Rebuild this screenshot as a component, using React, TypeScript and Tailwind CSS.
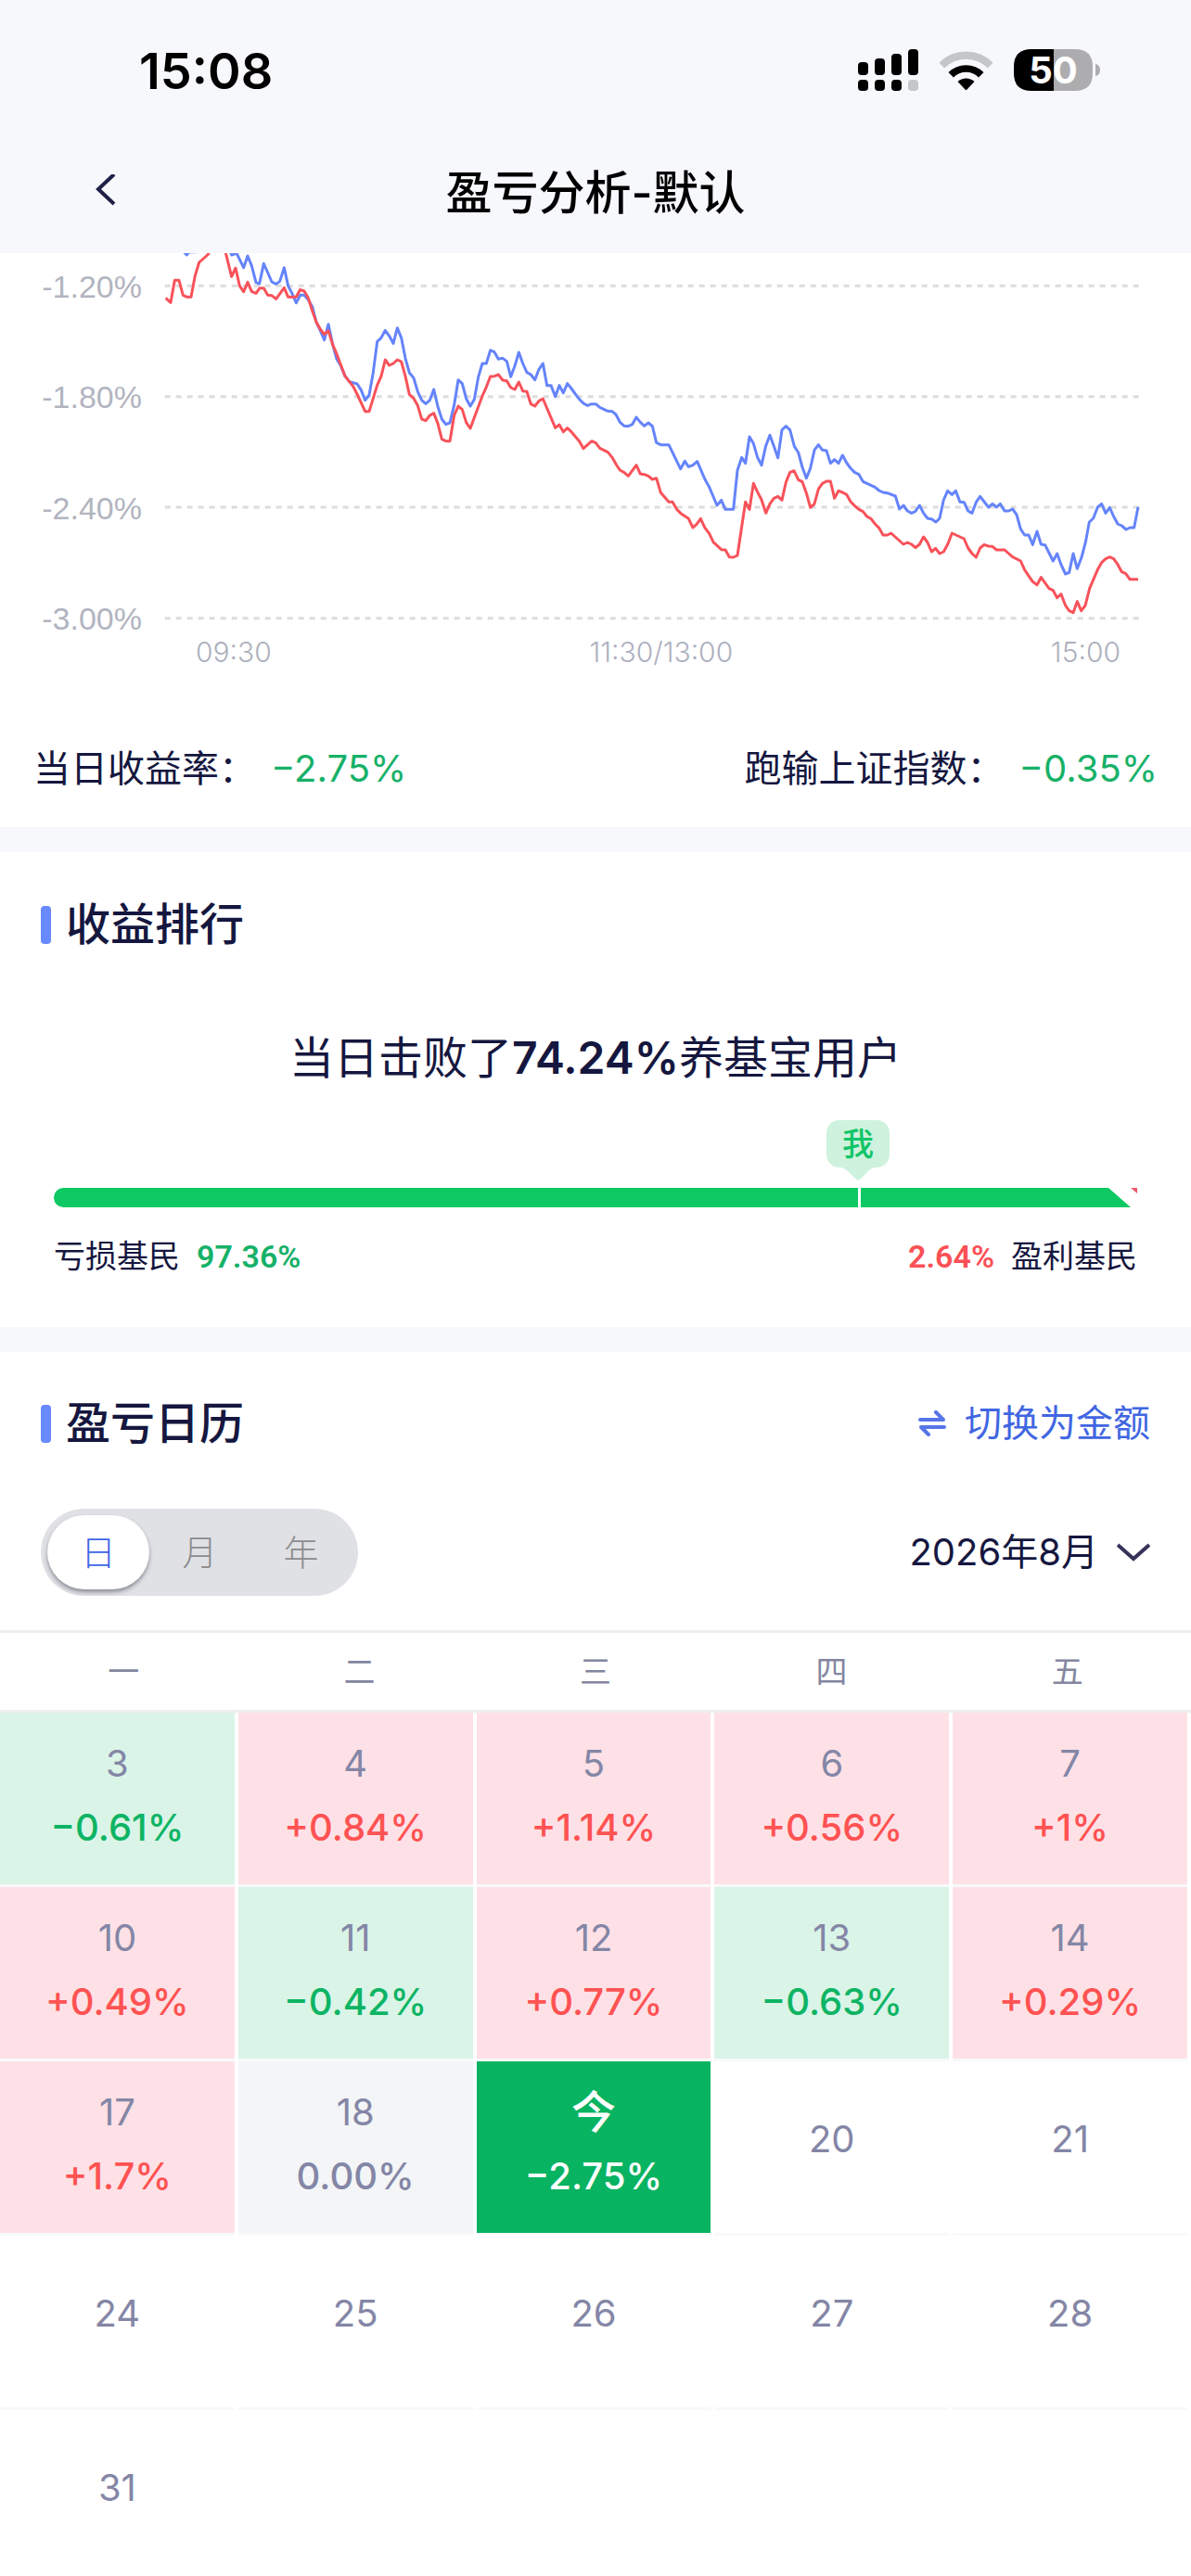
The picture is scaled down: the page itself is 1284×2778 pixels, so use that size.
import React from 'react';

const BLUE_LINE =
  '596,36 604,45 610,36 744,30 749,45 765,39 788,86 801,48 814,80 828,134 839,138 853,73 866,102 879,132 893,139 905,130 919,86 932,145 945,170 958,200 971,175 984,175 997,190 1010,212 1023,262 1036,290 1049,320 1062,269 1076,335 1089,382 1102,403 1116,437 1130,455 1155,462 1168,482 1181,515 1194,498 1207,425 1220,325 1232,314 1246,289 1259,307 1272,331 1285,281 1298,313 1311,379 1324,426 1338,443 1351,487 1364,515 1377,526 1390,515 1403,480 1416,535 1429,576 1442,593 1455,588 1469,530 1482,449 1495,461 1508,510 1521,534 1534,512 1547,440 1560,396 1573,396 1586,353 1599,359 1612,382 1626,379 1639,389 1652,439 1665,404 1678,360 1691,396 1704,425 1717,432 1730,449 1743,415 1756,396 1769,467 1782,467 1796,503 1809,467 1822,491 1835,461 1848,477 1861,495 1874,512 1887,525 1900,532 1913,527 1927,527 1940,538 1966,550 1980,551 1992,561 2006,587 2019,598 2032,599 2045,593 2058,570 2071,586 2084,598 2097,588 2110,599 2123,652 2137,659 2163,659 2201,737 2215,712 2227,730 2241,725 2255,713 2280,771 2294,796 2319,855 2333,838 2346,868 2372,868 2385,742 2399,700 2411,719 2424,633 2437,655 2450,700 2463,725 2477,662 2490,628 2503,664 2516,701 2529,611 2542,599 2555,611 2569,664 2582,684 2595,732 2608,767 2621,735 2634,676 2647,659 2660,676 2673,678 2686,719 2699,707 2712,719 2725,693 2738,717 2751,735 2764,748 2778,755 2791,778 2830,796 2843,807 2856,813 2870,815 2896,825 2909,867 2922,855 2935,873 2948,880 2960,875 2974,855 2987,880 3000,897 3013,899 3027,909 3039,897 3052,837 3065,808 3079,820 3091,808 3105,844 3118,845 3131,873 3144,880 3157,845 3170,826 3183,843 3197,861 3210,850 3223,861 3235,850 3249,873 3262,873 3275,867 3288,885 3301,932 3314,951 3327,951 3340,982 3354,939 3367,981 3380,983 3406,1035 3419,1011 3432,1047 3446,1077 3458,1072 3471,1011 3484,1060 3498,1023 3511,974 3523,909 3536,897 3550,861 3563,850 3576,880 3589,862 3602,891 3615,915 3628,921 3642,933 3655,927 3668,927 3681,860';

const RED_LINE =
  '536,184 552,199 565,127 579,127 592,175 605,181 618,181 631,112 644,69 671,45 682,30 728,30 749,115 762,87 775,145 788,164 801,133 814,163 828,169 840,152 853,152 866,175 879,176 893,187 919,151 932,181 958,181 971,157 984,162 997,184 1010,226 1023,262 1036,285 1049,302 1062,290 1076,335 1089,365 1116,437 1142,470 1155,495 1181,551 1194,551 1220,466 1233,437 1246,384 1259,402 1272,396 1285,384 1298,390 1311,437 1324,496 1338,509 1351,532 1364,576 1377,581 1390,564 1403,557 1416,590 1429,641 1442,647 1455,647 1469,564 1482,534 1495,545 1508,587 1521,606 1560,501 1573,472 1586,438 1599,437 1612,432 1626,450 1639,452 1652,474 1665,480 1678,456 1691,485 1704,487 1717,527 1730,534 1743,517 1756,510 1796,604 1809,594 1822,617 1835,605 1848,617 1874,648 1887,671 1914,647 1927,653 1940,670 1966,683 1980,700 1993,723 2005,741 2018,748 2032,760 2058,725 2071,753 2084,755 2097,760 2110,771 2123,767 2137,814 2163,844 2175,844 2189,868 2202,881 2227,898 2241,927 2253,916 2266,898 2280,928 2294,946 2307,974 2333,998 2346,999 2359,1022 2372,1023 2385,1017 2411,844 2424,868 2437,784 2450,812 2463,837 2477,880 2490,850 2503,832 2516,826 2529,838 2542,780 2555,748 2568,743 2582,772 2595,779 2608,815 2621,862 2634,850 2647,802 2660,784 2673,777 2686,777 2699,832 2712,808 2725,813 2738,820 2751,843 2764,856 2778,868 2791,875 2804,891 2817,898 2830,915 2843,928 2856,951 2870,951 2882,945 2922,981 2935,975 2948,981 2961,992 2974,981 2987,957 3000,975 3013,1005 3026,994 3039,1011 3052,1005 3065,981 3079,945 3118,963 3131,993 3144,1011 3157,1023 3170,993 3183,982 3197,987 3210,988 3223,999 3249,999 3275,1022 3301,1035 3314,1064 3340,1102 3354,1112 3367,1088 3393,1124 3406,1130 3419,1154 3432,1142 3446,1179 3458,1196 3471,1202 3484,1166 3497,1196 3510,1179 3524,1124 3550,1063 3563,1040 3576,1028 3589,1022 3602,1028 3615,1046 3628,1070 3641,1076 3654,1094 3681,1094';

const GRID_LINES = [145, 503, 861, 1220];
const Y_LABELS = ['-1.20%', '-1.80%', '-2.40%', '-3.00%'];
const X_LABELS = ['09:30', '11:30/13:00', '15:00'];
const WEEKDAYS = ['一', '二', '三', '四', '五'];

type Day = { day: string; value?: string; tone?: 'up' | 'down' | 'flat' | 'today' };

const WEEKS: Day[][] = [
  [
    { day: '3', value: '−0.61%', tone: 'down' },
    { day: '4', value: '+0.84%', tone: 'up' },
    { day: '5', value: '+1.14%', tone: 'up' },
    { day: '6', value: '+0.56%', tone: 'up' },
    { day: '7', value: '+1%', tone: 'up' },
  ],
  [
    { day: '10', value: '+0.49%', tone: 'up' },
    { day: '11', value: '−0.42%', tone: 'down' },
    { day: '12', value: '+0.77%', tone: 'up' },
    { day: '13', value: '−0.63%', tone: 'down' },
    { day: '14', value: '+0.29%', tone: 'up' },
  ],
  [
    { day: '17', value: '+1.7%', tone: 'up' },
    { day: '18', value: '0.00%', tone: 'flat' },
    { day: '今', value: '−2.75%', tone: 'today' },
    { day: '20' },
    { day: '21' },
  ],
  [{ day: '24' }, { day: '25' }, { day: '26' }, { day: '27' }, { day: '28' }],
  [{ day: '31' }, { day: '' }, { day: '' }, { day: '' }, { day: '' }],
];

const CELL_BG = {
  up: 'bg-[#fee1e6]',
  down: 'bg-[#daf4e7]',
  flat: 'bg-[#f3f5f7]',
  today: 'bg-[#08b361]',
};

const VALUE_COLOR = {
  up: 'text-[#ff5252]',
  down: 'text-[#0db464]',
  flat: 'text-[#8486a6]',
  today: 'text-white',
};

function StatusBar() {
  return (
    <div className="flex h-[154px] items-center justify-between pr-[97px] pl-[150px] text-black">
      <span className="text-[54px] leading-[60px] font-semibold">15:08</span>
      <svg className="h-[48px] w-[262px]" viewBox="0 0 262 48" role="img" aria-label="信号、无线网络、电量 50%">
        <rect x="0" y="14" width="11" height="14" rx="4" />
        <rect x="18" y="10" width="11" height="18" rx="4" />
        <rect x="36" y="5" width="11" height="23" rx="4" />
        <rect x="54" y="0" width="11" height="28" rx="4" />
        <rect x="0" y="33" width="11" height="12" rx="4" />
        <rect x="18" y="33" width="11" height="12" rx="4" />
        <rect x="36" y="33" width="11" height="12" rx="4" />
        <rect x="54" y="33" width="11" height="12" rx="4" fill="#c5c6ca" />
        <path d="M87.500 14.500 A41 41 0 0 1 145.500 14.500 L140 20.500 A33 33 0 0 0 93 20.500 Z" fill="#c5c6ca" />
        <path d="M97.500 25 A27 27 0 0 1 135.500 25 L130 30.500 A19 19 0 0 0 103 30.500 Z" />
        <path d="M107.500 35 A13 13 0 0 1 125.500 35 L117.500 43.500 Q116.500 44.500 115.500 43.500 Z" />
        <path d="M211 0 H234 Q253 0 253 19 V26 Q253 45 234 45 H211 Z" fill="#adadaf" />
        <path d="M211 0 H187 Q168 0 168 19 V26 Q168 45 187 45 H211 Z" />
        <path d="M256 16 Q261 17 261 22.500 Q261 28 256 29 Z" fill="#adadaf" />
        <text x="210.500" y="37" textAnchor="middle" fontSize="40" fontWeight="700" fill="#fff">
          50
        </text>
      </svg>
    </div>
  );
}

function SectionTitle({ children }: { children: React.ReactNode }) {
  return (
    <h2 className="flex items-center gap-[16px] text-[48px] leading-[60px] font-medium">
      <span className="h-[41px] w-[11px] rounded-[4px] bg-[#6989ff]" />
      {children}
    </h2>
  );
}

function TrendChart() {
  return (
    <section className="bg-white">
      <div className="flex items-start gap-[24px] pr-[54px]">
        <div className="flex h-[414px] w-[153px] shrink-0 flex-col justify-between pt-[16px] text-right font-['Liberation_Sans',sans-serif] text-[34px] leading-[40px] text-[#b2b4c0]">
          {Y_LABELS.map((label) => (
            <span key={label}>{label}</span>
          ))}
        </div>
        <svg
          className="h-[397px] min-w-0 flex-1"
          viewBox="531 39 3159 1191"
          preserveAspectRatio="none"
          fill="none"
          role="img"
          aria-label="收益率走势"
        >
          {GRID_LINES.map((y) => (
            <path key={y} d={`M533 ${y} H3690`} stroke="#dcdcdc" strokeWidth="9" strokeDasharray="18 18" />
          ))}
          <polyline points={BLUE_LINE} stroke="#6584fa" strokeWidth="9" strokeLinejoin="round" />
          <polyline points={RED_LINE} stroke="#f8525a" strokeWidth="9" strokeLinejoin="round" />
        </svg>
      </div>
      <div className="flex justify-between pr-[76px] pl-[211px] text-[30px] leading-[32px] font-light text-[#adb0be]">
        {X_LABELS.map((label) => (
          <span key={label}>{label}</span>
        ))}
      </div>
      <div className="flex justify-between px-[36px] pt-[82px] pb-[35px] text-[40px] leading-[56px]">
        <p>
          当日收益率：<span className="ml-[16px] text-[#17b168]">−2.75%</span>
        </p>
        <p>
          跑输上证指数：<span className="ml-[16px] text-[#17b168]">−0.35%</span>
        </p>
      </div>
    </section>
  );
}

function Ranking() {
  return (
    <section className="bg-white pt-[48px] pb-[52px]">
      <div className="px-[44px]">
        <SectionTitle>收益排行</SectionTitle>
      </div>
      <p className="mt-[84px] text-center text-[48px] leading-[60px]">
        当日击败了<strong className="font-semibold">74.24%</strong>养基宝用户
      </p>
      <div className="relative mx-[58px] mt-[37px] pt-[73px]">
        <div className="absolute top-0 left-[74.24%] flex -translate-x-1/2 flex-col items-center">
          <span className="flex h-[51px] w-[68px] items-center justify-center rounded-[14px] bg-[#cef2de] text-[34px] leading-[40px] font-medium text-[#12c568]">
            我
          </span>
          <svg className="h-[14px] w-[36px]" viewBox="0 0 36 14">
            <path d="M0 0 H36 Q32 1 29 4 L21 12 Q18 15 15 12 L7 4 Q4 1 0 0 Z" fill="#cef2de" />
          </svg>
        </div>
        <div className="flex h-[21px] gap-[3px]">
          <div className="w-[74.24%] rounded-l-full bg-[#0ec963]" />
          <div className="flex flex-1">
            <div className="flex-1 bg-[#0ec963]" />
            <svg className="h-[21px] w-[31px]" viewBox="0 0 31 21">
              <path d="M0 0 L24 21 H0 Z" fill="#0ec963" />
              <path d="M24 0 H31 V6 Z" fill="#f0586a" />
            </svg>
          </div>
        </div>
        <div className="mt-[29px] flex justify-between text-[34px] leading-[48px]">
          <p className="flex items-center gap-[18px]">
            亏损基民
            <strong className="font-[Roboto,sans-serif] font-semibold text-[#17b168]">97.36%</strong>
          </p>
          <p className="flex items-center gap-[18px]">
            <strong className="font-[Roboto,sans-serif] font-semibold text-[#fb5055]">2.64%</strong>
            盈利基民
          </p>
        </div>
      </div>
    </section>
  );
}

function DayCell({ day, value, tone }: Day) {
  if (!value || !tone) {
    return (
      <div className="flex h-[185px] items-center justify-center pb-[18px] text-[40px] leading-[48px] text-[#8486a6]">{day}</div>
    );
  }
  const dayStyle = tone === 'today' ? 'text-[48px] font-medium text-white' : 'text-[40px] text-[#8486a6]';
  return (
    <div className={`flex h-[185px] flex-col items-center justify-center gap-[21px] pb-[6px] ${CELL_BG[tone]}`}>
      <span className={`leading-[48px] ${dayStyle}`}>{day}</span>
      <span className={`text-[40px] leading-[48px] font-medium ${VALUE_COLOR[tone]}`}>{value}</span>
    </div>
  );
}

function Calendar() {
  return (
    <section className="bg-white pt-[47px]">
      <div className="flex items-center justify-between px-[44px]">
        <SectionTitle>盈亏日历</SectionTitle>
        <button type="button" className="flex items-center gap-[20px] text-[40px] leading-[56px] text-[#4166e2]">
          <svg className="h-[28px] w-[30px]" viewBox="0 0 30 28" fill="none" stroke="#5575e8" strokeWidth="4" strokeLinecap="round" strokeLinejoin="round">
            <path d="M2 10 H27 L19 2" />
            <path d="M28 18 H3 L11 26" />
          </svg>
          切换为金额
        </button>
      </div>
      <div className="mt-[62px] flex items-center justify-between px-[44px]">
        <div className="flex h-[94px] rounded-full bg-[#e0e1e5] p-[7px] text-[38px] leading-[48px] font-light text-[#8c8c8e]">
          <button type="button" aria-pressed="true" className="w-[110px] rounded-full bg-white text-[#3f66e8] shadow-[0_3px_4px_rgba(60,64,80,0.5)]">
            日
          </button>
          <button type="button" aria-pressed="false" className="w-[109px]">
            月
          </button>
          <button type="button" aria-pressed="false" className="w-[109px]">
            年
          </button>
        </div>
        <button type="button" className="flex items-center gap-[20px] text-[40px] leading-[56px]">
          2026年8月
          <svg className="h-[20px] w-[36px]" viewBox="0 0 36 20" fill="none" stroke="#36335a" strokeWidth="4">
            <path d="M1 2 L18 17 L35 2" />
          </svg>
        </button>
      </div>
      <table className="mt-[37px] block">
        <thead className="block border-y-[3px] border-[#edefef]">
          <tr className="flex h-[83px] items-center px-[6px]">
            {WEEKDAYS.map((name) => (
              <th key={name} scope="col" className="flex-1 text-[34px] leading-[48px] font-normal text-[#8486a0]">
                {name}
              </th>
            ))}
          </tr>
        </thead>
        <tbody className="block">
          {WEEKS.map((week) => (
            <tr key={week[0].day} className="flex gap-[4px] pr-[4px]">
              {week.map((item, index) => (
                <td key={index} className="flex-1 border-b-[3px] border-[#f8f9fa] p-0">
                  <DayCell {...item} />
                </td>
              ))}
            </tr>
          ))}
        </tbody>
      </table>
    </section>
  );
}

export default function App() {
  return (
    <div
      lang="zh-CN"
      className="flex h-screen flex-col bg-[#f7f8fc] font-[Inter,'Noto_Sans_CJK_SC',sans-serif] text-[#15173f]"
    >
      <header className="shrink-0">
        <StatusBar />
        <div className="grid h-[119px] grid-cols-[1fr_auto_1fr] items-center pb-[12px]">
          <button type="button" aria-label="返回" className="ml-[100px] justify-self-start">
            <svg className="h-[40px] w-[28px]" viewBox="0 0 28 40" fill="none" stroke="#1f2046" strokeWidth="4">
              <path d="M23 0 L6 16 L23 32" />
            </svg>
          </button>
          <h1 className="text-[50px] leading-[60px] font-medium text-black">盈亏分析-默认</h1>
        </div>
      </header>
      <main className="flex min-h-0 flex-1 flex-col gap-[27px] overflow-hidden">
        <TrendChart />
        <Ranking />
        <Calendar />
      </main>
    </div>
  );
}
